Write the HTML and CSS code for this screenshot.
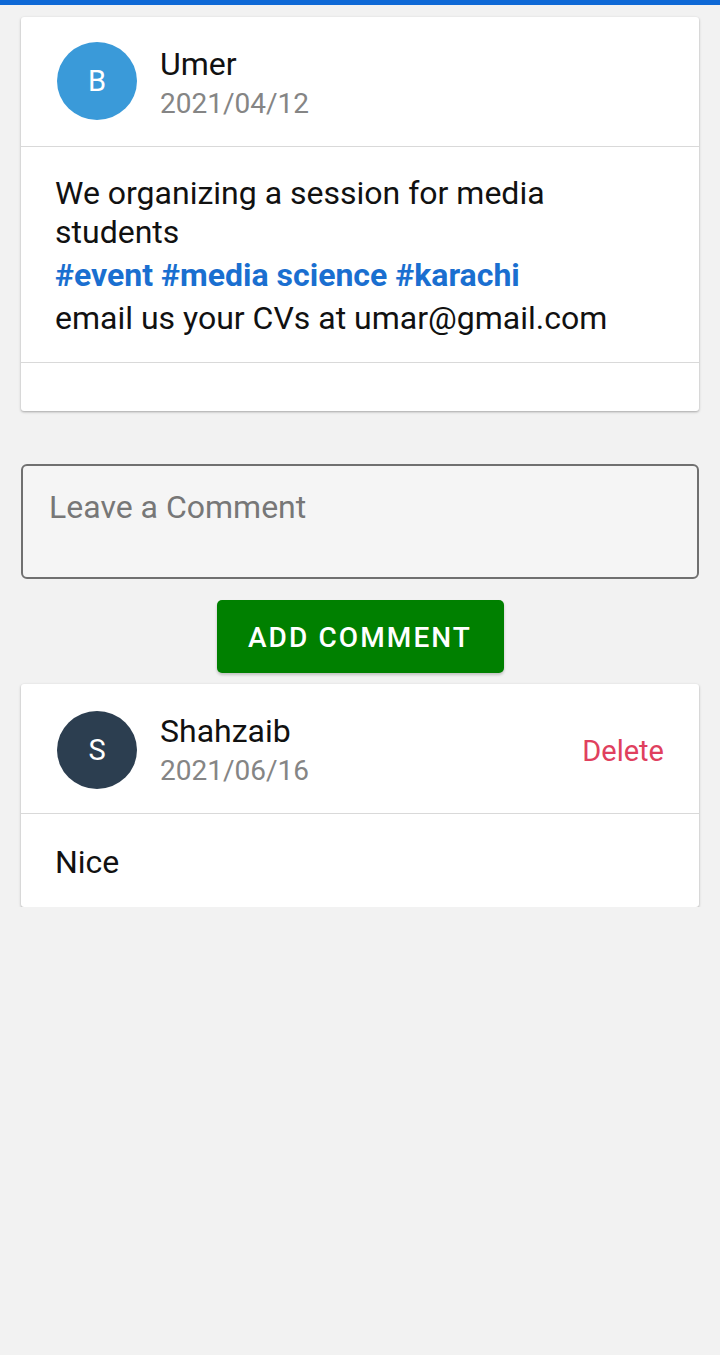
FILE: index.html
```html
<!DOCTYPE html>
<html>
<head>
<meta charset="utf-8">
<link rel="stylesheet" href="styles.css">
</head>
<body>
<div class="topbar"></div>
<main class="page">
  <section class="card post">
    <div class="head">
      <div class="avatar avatar-blue">B</div>
      <div class="meta">
        <div class="name">Umer</div>
        <div class="date">2021/04/12</div>
      </div>
    </div>
    <div class="post-body">
      <p class="lead">We organizing a session for media students</p>
      <p class="tags">#event #media science #karachi</p>
      <p class="line">email us your CVs at umar@gmail.com</p>
    </div>
    <div class="post-foot"></div>
  </section>

  <textarea class="comment-input" placeholder="Leave a Comment"></textarea>

  <div class="actions">
    <button class="btn-add">ADD COMMENT</button>
  </div>

  <section class="card comment">
    <div class="head head-comment">
      <div class="avatar avatar-dark">S</div>
      <div class="meta">
        <div class="name">Shahzaib</div>
        <div class="date">2021/06/16</div>
      </div>
      <a class="delete">Delete</a>
    </div>
    <div class="comment-body">Nice</div>
  </section>
</main>
</body>
</html>
```

FILE: styles.css
```css
* { box-sizing: border-box; }
html, body {
  margin: 0;
  padding: 0;
  background: #f2f2f2;
  font-family: Roboto, "Noto Sans", "Liberation Sans", sans-serif;
  color: #111;
}
.topbar {
  height: 5px;
  background: #0f69d6;
}
.page {
  padding: 12px 21px 0;
}
.card {
  background: #fff;
  border-radius: 3px;
  box-shadow: 0 1px 3px rgba(0,0,0,0.22), 0 1px 2px rgba(0,0,0,0.12);
}
.head {
  display: flex;
  align-items: flex-start;
  padding: 25px 35px 0 36px;
  height: 130px;
  border-bottom: 1px solid #d9d9d9;
}
.avatar {
  width: 80px;
  height: 78px;
  border-radius: 50%;
  flex: none;
  display: flex;
  align-items: center;
  justify-content: center;
  color: #fff;
  font-size: 29px;
}
.avatar-blue { background: #3a9ad9; }
.avatar-dark { background: #2c3e50; }
.meta {
  margin-left: 23px;
  margin-top: 4px;
  flex: 1;
}
.name {
  font-size: 32px;
  line-height: 37px;
  color: #111;
}
.date {
  margin-top: 2px;
  font-size: 28px;
  line-height: 38px;
  color: #858585;
}
.post-body {
  padding: 27px 34px 22px;
  border-bottom: 1px solid #d9d9d9;
  font-size: 32px;
}
.post-body p { margin: 0; }
.lead { line-height: 39px; }
.tags {
  line-height: 43px;
  margin-top: 2px !important;
  font-weight: 700;
  color: #1a6fd0;
}
.line { line-height: 43px; }
.post-foot { height: 48px; }

.comment-input {
  display: block;
  width: 100%;
  height: 115px;
  margin: 53px 0 0;
  padding: 22px 26px;
  border: 2px solid #707070;
  border-radius: 6px;
  background: #f5f5f5;
  font-family: inherit;
  font-size: 32px;
  line-height: 38px;
  resize: none;
  outline: none;
}
.comment-input::placeholder { color: #777; }

.actions {
  display: flex;
  justify-content: center;
  margin-top: 21px;
}
.btn-add {
  width: 287px;
  height: 73px;
  padding: 2px 0 0;
  border: none;
  border-radius: 5px;
  background: #008000;
  color: #fff;
  font-family: inherit;
  font-size: 28px;
  font-weight: 500;
  letter-spacing: 2.1px;
  box-shadow: 0 2px 3px rgba(0,0,0,0.2);
}

.comment { margin-top: 11px; }
.head-comment {
  padding-top: 27px;
  height: 130px;
}
.head-comment .meta { margin-top: 2px; }
.delete {
  align-self: flex-start;
  margin-top: 23px;
  font-size: 29px;
  line-height: 34px;
  color: #e0405e;
}
.comment-body {
  padding: 29px 34px 26px;
  font-size: 32px;
  line-height: 38px;
}
```
